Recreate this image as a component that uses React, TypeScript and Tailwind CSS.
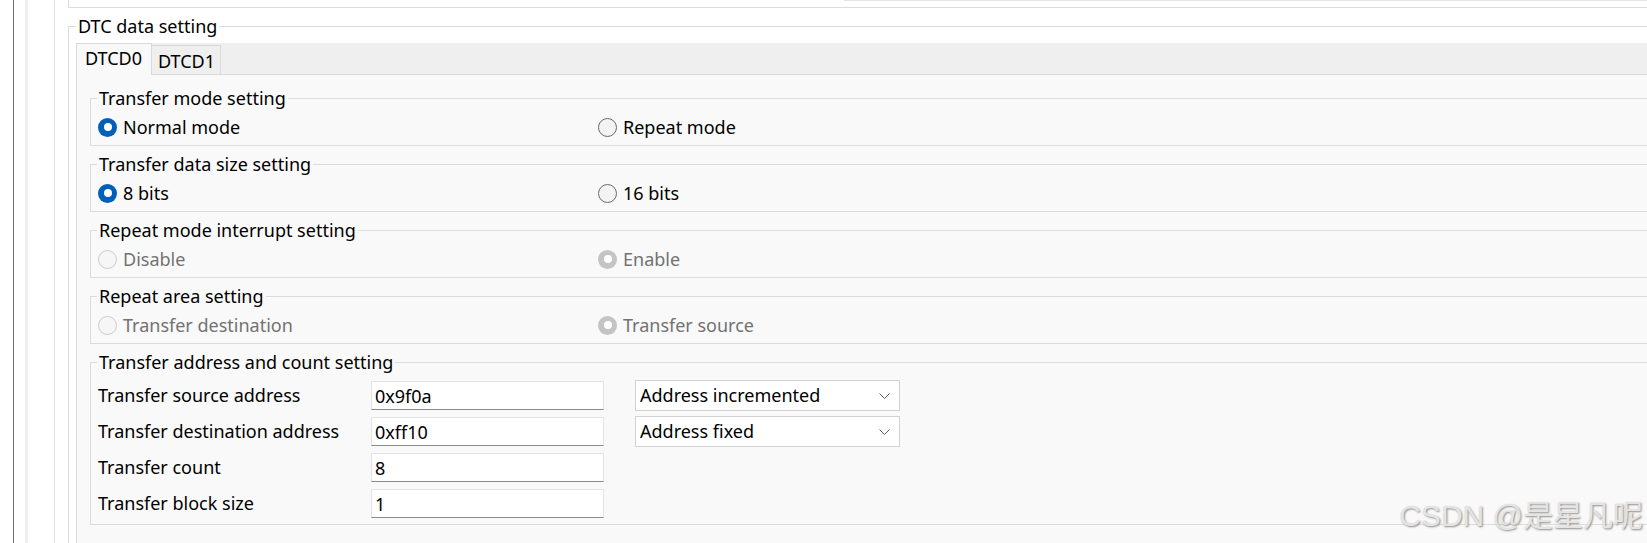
import React, { FC } from "react";
import clsx from "clsx";

interface RadioProps {
  label: string;
  checked?: boolean;
  disabled?: boolean;
}

const Radio: FC<RadioProps> = ({ label, checked, disabled }) => {
  return (
    <div className="flex h-[26px] items-center gap-[6px]">
      {checked ? (
        <span
          className={clsx(
            "flex h-[19px] w-[19px] items-center justify-center rounded-full",
            disabled ? "bg-[#c4c4c4]" : "bg-[#005fb8]"
          )}
        >
          <span className="h-[8px] w-[8px] rounded-full bg-white" />
        </span>
      ) : (
        <span
          className={clsx(
            "h-[19px] w-[19px] rounded-full border",
            disabled ? "border-[#cccccc] bg-[#f6f6f6]" : "border-[#6a6a6a] bg-[#f3f3f3]"
          )}
        />
      )}
      <span className={disabled ? "text-[#727272]" : "text-black"}>{label}</span>
    </div>
  );
};

const Group: FC<{ title: string; children: React.ReactNode; className?: string }> = ({
  title,
  children,
  className,
}) => (
  <fieldset className={clsx("border border-r-0 border-[#dcdcdc] pl-[6px]", className)}>
    <legend className="px-[2px] leading-[24px] text-black">{title}</legend>
    {children}
  </fieldset>
);

const RadioGroup: FC<{ title: string; options: RadioProps[] }> = ({ title, options }) => (
  <Group title={title} className="pt-[4px] pb-[5px]">
    <div className="flex pl-[1px]">
      <div className="w-[500px]">
        <Radio {...options[0]} />
      </div>
      <Radio {...options[1]} />
    </div>
  </Group>
);

const TextBox: FC<{ value: string }> = ({ value }) => (
  <input
    readOnly
    value={value}
    className="h-[29px] w-[233px] border border-[#e3e3e3] border-b-[#8a8a8a] bg-white px-[3px] text-[18px] text-black outline-none"
  />
);

const Combo: FC<{ value: string }> = ({ value }) => (
  <div className="ml-[31px] flex h-[31px] w-[265px] items-center justify-between border border-[#d2d2d2] bg-white pl-[4px] pr-[9px]">
    <span className="text-black">{value}</span>
    <svg width="11" height="6" viewBox="0 0 11 6" fill="none">
      <path d="M0.5 0.5L5.5 5.5L10.5 0.5" stroke="#5f5f5f" strokeWidth="1" />
    </svg>
  </div>
);

const addressRows = [
  { label: "Transfer source address", value: "0x9f0a", mode: "Address incremented" },
  { label: "Transfer destination address", value: "0xff10", mode: "Address fixed" },
  { label: "Transfer count", value: "8" },
  { label: "Transfer block size", value: "1" },
];

export default function App() {
  return (
    <div className="relative flex h-[543px] w-[1647px] overflow-hidden bg-white font-['Noto_Sans',sans-serif] text-[18px]">
      {/* left gutter */}
      <div className="flex h-full w-[68px] shrink-0">
        <div className="w-[13px]" />
        <div className="w-px bg-[#727272]" />
        <div className="w-[11px]" />
        <div className="w-[3px] bg-[#efefef]" />
        <div className="w-[26px]" />
        <div className="w-px bg-[#e2e2e2]" />
      </div>

      <div className="flex min-w-0 flex-1 flex-col">
        <div className="h-[8px] shrink-0 border-b border-l border-[#dcdcdc]">
          <div className="ml-[775px] border-t border-[#e4e4e4]" />
        </div>

        <fieldset className="mt-[6px] shrink-0 border border-r-0 border-b-0 border-[#dcdcdc] pl-[7px] pt-[5px]">
          <legend className="px-[2px] leading-[24px] text-black">DTC data setting</legend>

          <div className="flex h-[32px] items-end bg-[#efefef]">
            <div className="flex h-[32px] w-[76px] items-start border border-b-0 border-[#d9d9d9] bg-[#f9f9f9] pl-[8px] pt-[2px] leading-[24px]">
              DTCD0
            </div>
            <div className="flex h-[30px] w-[69px] items-start border-b border-r border-t border-[#d9d9d9] pl-[6px] pt-[3px] leading-[24px]">
              DTCD1
            </div>
            <div className="flex-1 border-b border-[#d9d9d9]" />
          </div>

          <div className="flex flex-col gap-[6px] border-l border-[#d9d9d9] bg-[#f9f9f9] pb-[40px] pl-[13px] pt-[11px]">
            <RadioGroup
              title="Transfer mode setting"
              options={[{ label: "Normal mode", checked: true }, { label: "Repeat mode" }]}
            />
            <RadioGroup
              title="Transfer data size setting"
              options={[{ label: "8 bits", checked: true }, { label: "16 bits" }]}
            />
            <RadioGroup
              title="Repeat mode interrupt setting"
              options={[
                { label: "Disable", disabled: true },
                { label: "Enable", checked: true, disabled: true },
              ]}
            />
            <RadioGroup
              title="Repeat area setting"
              options={[
                { label: "Transfer destination", disabled: true },
                { label: "Transfer source", checked: true, disabled: true },
              ]}
            />

            <Group title="Transfer address and count setting" className="pt-[7px] pb-[6px]">
              <div className="flex flex-col gap-[7px] pl-[1px]">
                {addressRows.map((row) => (
                  <div key={row.label} className="flex h-[29px] items-center">
                    <span className="w-[273px] text-black">{row.label}</span>
                    <TextBox value={row.value} />
                    {row.mode && <Combo value={row.mode} />}
                  </div>
                ))}
              </div>
            </Group>
          </div>
        </fieldset>
      </div>

      <div className="pointer-events-none absolute bottom-[12px] right-[4px] font-['Liberation_Sans','Noto_Sans_CJK_SC',sans-serif] text-[30px] leading-none text-[#e4e4e4] [text-shadow:1px_1px_2px_#8a8a8a]">
        CSDN @是星凡呢
      </div>
    </div>
  );
}
